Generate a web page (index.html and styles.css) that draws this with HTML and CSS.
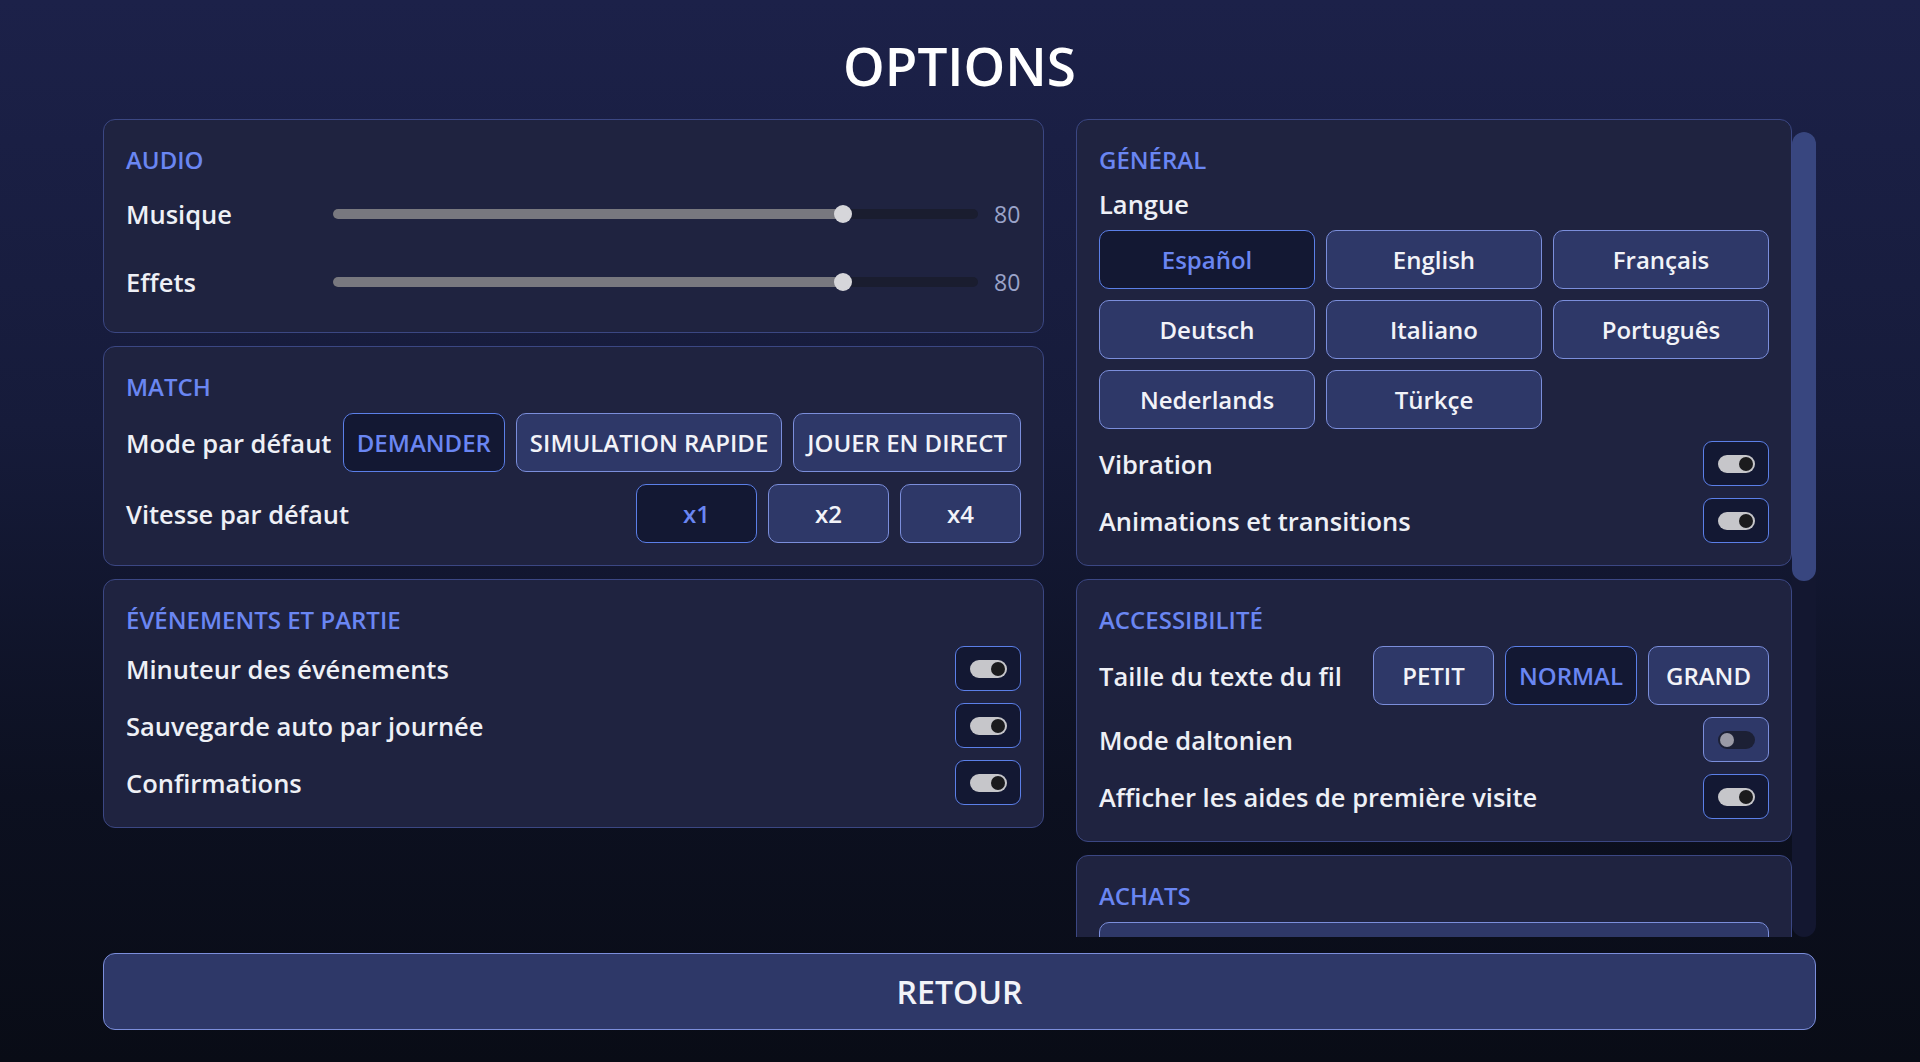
FILE: index.html
```html
<html>
	<head>
		<title>Options</title>
		<link rel="stylesheet" href="styles.css">
	</head>
	<body>
		<div class="screen">
			<h1 class="title">OPTIONS</h1>

			<div class="scroller">
				<div class="viewport">
					<div class="columns">

						<div class="col">
							<section class="panel">
								<h2>AUDIO</h2>
								<div class="row slider-row">
									<span class="label">Musique</span>
									<div class="slider"><div class="fill" style="width:79%"></div><div class="thumb" style="left:79%"></div></div>
									<span class="value">80</span>
								</div>
								<div class="row slider-row">
									<span class="label">Effets</span>
									<div class="slider"><div class="fill" style="width:79%"></div><div class="thumb" style="left:79%"></div></div>
									<span class="value">80</span>
								</div>
							</section>

							<section class="panel">
								<h2>MATCH</h2>
								<div class="row">
									<span class="label">Mode par défaut</span>
									<div class="btns">
										<button class="btn on">DEMANDER</button>
										<button class="btn">SIMULATION RAPIDE</button>
										<button class="btn">JOUER EN DIRECT</button>
									</div>
								</div>
								<div class="row">
									<span class="label">Vitesse par défaut</span>
									<div class="btns">
										<button class="btn on">x1</button>
										<button class="btn">x2</button>
										<button class="btn">x4</button>
									</div>
								</div>
							</section>

							<section class="panel">
								<h2>ÉVÉNEMENTS ET PARTIE</h2>
								<div class="row">
									<span class="label">Minuteur des événements</span>
									<div class="toggle on"><span class="track"><span class="knob"></span></span></div>
								</div>
								<div class="row">
									<span class="label">Sauvegarde auto par journée</span>
									<div class="toggle on"><span class="track"><span class="knob"></span></span></div>
								</div>
								<div class="row">
									<span class="label">Confirmations</span>
									<div class="toggle on"><span class="track"><span class="knob"></span></span></div>
								</div>
							</section>
						</div>

						<div class="col">
							<section class="panel">
								<h2>GÉNÉRAL</h2>
								<div class="sublabel">Langue</div>
								<div class="lang-grid">
									<button class="btn on">Español</button>
									<button class="btn">English</button>
									<button class="btn">Français</button>
									<button class="btn">Deutsch</button>
									<button class="btn">Italiano</button>
									<button class="btn">Português</button>
									<button class="btn">Nederlands</button>
									<button class="btn">Türkçe</button>
								</div>
								<div class="row">
									<span class="label">Vibration</span>
									<div class="toggle on"><span class="track"><span class="knob"></span></span></div>
								</div>
								<div class="row">
									<span class="label">Animations et transitions</span>
									<div class="toggle on"><span class="track"><span class="knob"></span></span></div>
								</div>
							</section>

							<section class="panel">
								<h2>ACCESSIBILITÉ</h2>
								<div class="row">
									<span class="label">Taille du texte du fil</span>
									<div class="btns">
										<button class="btn">PETIT</button>
										<button class="btn on">NORMAL</button>
										<button class="btn">GRAND</button>
									</div>
								</div>
								<div class="row">
									<span class="label">Mode daltonien</span>
									<div class="toggle"><span class="track"><span class="knob"></span></span></div>
								</div>
								<div class="row">
									<span class="label">Afficher les aides de première visite</span>
									<div class="toggle on"><span class="track"><span class="knob"></span></span></div>
								</div>
							</section>

							<section class="panel">
								<h2>ACHATS</h2>
								<button class="btn wide">Restaurer les achats</button>
							</section>
						</div>

					</div>
				</div>
				<div class="scrollbar"><div class="scroll-thumb"></div></div>
			</div>

			<button class="btn back">RETOUR</button>
		</div>
	</body>
</html>
```

FILE: styles.css
```css
html, body { margin:0; height:100%; }
body {
	background:linear-gradient(180deg, #1c2149 0%, #161b3a 40%, #0c1020 75%, #090c16 100%);
	font-family:"Open Sans", "Noto Sans", sans-serif;
	color:#eef0f6;
	overflow:hidden;
}

.screen {
	height:1062px;
	box-sizing:border-box;
	padding:33px 104px 32px 103px;
	display:flex;
	flex-direction:column;
}

.title {
	margin:0 0 21px;
	font-size:53px;
	line-height:65px;
	font-weight:600;
	text-align:center;
	color:#fff;
}

/* scroll area, bar drawn by hand */
.scroller {
	flex:1;
	min-height:0;
	display:flex;
}
.viewport { flex:1; min-width:0; overflow:hidden; }
.scrollbar {
	width:24px;
	flex:none;
	margin-top:13px;
	background:#131730;
	border-radius:12px;
}
.scroll-thumb { height:449px; background:#38467f; border-radius:12px; }

.columns {
	display:grid;
	grid-template-columns:941px 1fr;
	column-gap:32px;
	align-items:start;
}
.col { display:flex; flex-direction:column; gap:13px; }

.panel {
	background:#1f2340;
	border:1px solid #3b4783;
	border-radius:12px;
	padding:26px 22px 22px;
	display:flex;
	flex-direction:column;
	gap:12px;
}
.panel h2 {
	margin:0;
	font-size:24px;
	line-height:28px;
	font-weight:600;
	color:#6a86f2;
}

.row {
	display:flex;
	align-items:center;
	justify-content:space-between;
	gap:8px;
}
.label {
	font-size:25.5px;
	font-weight:600;
	white-space:nowrap;
}
.sublabel {
	font-size:25.5px;
	font-weight:600;
	line-height:32px;
	margin:2px 0 -2px;
}

/* sliders */
.slider-row { height:56px; justify-content:flex-start; gap:0; }
.slider-row .label { width:207px; }
.slider {
	position:relative;
	flex:1;
	height:10px;
	border-radius:5px;
	background:#1a1d2f;
	margin-right:16px;
}
.slider .fill { height:100%; border-radius:5px; background:#78787f; }
.slider .thumb {
	position:absolute;
	top:50%;
	width:18px;
	height:18px;
	margin:-9px 0 0 -9px;
	border-radius:50%;
	background:#d6d6da;
}
.value { font-size:23px; font-weight:500; color:#9aa3c9; width:27px; }

/* buttons */
.btns { display:flex; gap:11px; flex:none; }
.btn {
	font-family:inherit;
	font-size:24px;
	font-weight:600;
	color:#f2f3f8;
	background:#2e3868;
	border:1px solid #7b8edb;
	border-radius:10px;
	height:59px;
	min-width:121px;
	padding:0 13px;
	white-space:nowrap;
	cursor:pointer;
}
.btn.on { background:#131833; border-color:#5b7fe8; color:#6a86f2; }

.lang-grid {
	display:grid;
	grid-template-columns:repeat(3, 1fr);
	gap:11px;
}
.btn.wide { width:100%; }

/* toggles */
.toggle {
	width:66px;
	height:45px;
	box-sizing:border-box;
	border:1px solid #7b8edb;
	border-radius:9px;
	background:#2e3868;
	display:flex;
	align-items:center;
	justify-content:center;
	flex:none;
}
.toggle.on { background:#131833; border-color:#5b7fe8; }
.track {
	width:37px;
	height:18px;
	border-radius:9px;
	background:#1c2035;
	display:flex;
	align-items:center;
	padding:0 2px;
	box-sizing:border-box;
}
.knob { width:14px; height:14px; border-radius:50%; background:#9a9aa6; }
.toggle.on .track { background:#c6c6ca; justify-content:flex-end; }
.toggle.on .knob { background:#1b1b1d; }

.back {
	margin-top:16px;
	height:77px;
	width:100%;
	font-size:32px;
	font-weight:600;
	border-radius:12px;
	flex:none;
}
```
